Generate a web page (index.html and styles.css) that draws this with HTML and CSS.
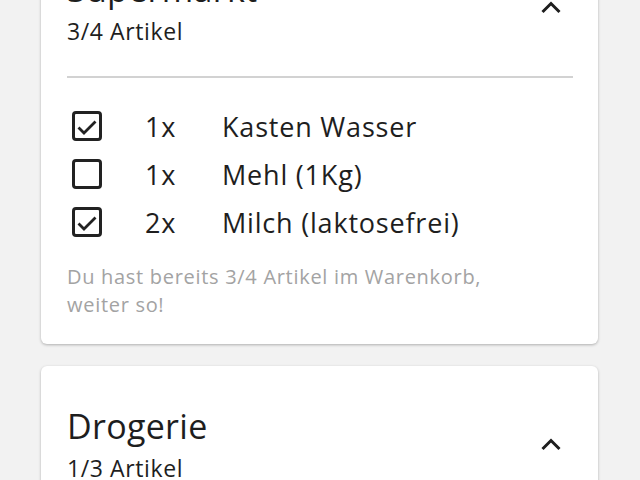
FILE: index.html
```html
<!DOCTYPE html>
<html lang="de">
<head>
<meta charset="utf-8">
<title>Einkaufsliste</title>
<link rel="stylesheet" href="styles.css">
</head>
<body>
<main class="lists">
  <section class="card">
    <header class="card-head">
      <div class="card-titles">
        <h2 class="card-title">Supermarkt</h2>
        <div class="card-sub">3/4 Artikel</div>
      </div>
      <button class="toggle" aria-label="Einklappen">
        <svg width="24" height="24" viewBox="0 0 24 24"><path d="M3.5 17 L12 8.5 L20.5 17" fill="none" stroke="#1e1e1e" stroke-width="3"/></svg>
      </button>
    </header>
    <hr class="divider">
    <ul class="items">
      <li class="item">
        <span class="check"><svg width="30" height="30" viewBox="0 0 30 30"><rect x="1.5" y="1.5" width="27" height="27" rx="2.5" fill="none" stroke="#222" stroke-width="3"/><path d="M6.5 16.5 L12 22 L23.5 10.5" fill="none" stroke="#222" stroke-width="2.8"/></svg></span>
        <span class="qty">1x</span>
        <span class="name">Kasten Wasser</span>
      </li>
      <li class="item">
        <span class="check"><svg width="30" height="30" viewBox="0 0 30 30"><rect x="1.5" y="1.5" width="27" height="27" rx="2.5" fill="none" stroke="#222" stroke-width="3"/></svg></span>
        <span class="qty">1x</span>
        <span class="name">Mehl (1Kg)</span>
      </li>
      <li class="item">
        <span class="check"><svg width="30" height="30" viewBox="0 0 30 30"><rect x="1.5" y="1.5" width="27" height="27" rx="2.5" fill="none" stroke="#222" stroke-width="3"/><path d="M6.5 16.5 L12 22 L23.5 10.5" fill="none" stroke="#222" stroke-width="2.8"/></svg></span>
        <span class="qty">2x</span>
        <span class="name">Milch (laktosefrei)</span>
      </li>
    </ul>
    <p class="hint">Du hast bereits 3/4 Artikel im Warenkorb,<br>weiter so!</p>
  </section>
  <section class="card">
    <header class="card-head">
      <div class="card-titles">
        <h2 class="card-title">Drogerie</h2>
        <div class="card-sub">1/3 Artikel</div>
      </div>
      <button class="toggle" aria-label="Einklappen">
        <svg width="24" height="24" viewBox="0 0 24 24"><path d="M3.5 17 L12 8.5 L20.5 17" fill="none" stroke="#1e1e1e" stroke-width="3"/></svg>
      </button>
    </header>
  </section>
</main>
</body>
</html>
```
FILE: styles.css
```css
html, body {
  margin: 0;
  padding: 0;
  background: #f2f2f2;
  font-family: "Open Sans", "Noto Sans", sans-serif;
  color: #1e1e1e;
  overflow: hidden;
}
.lists {
  display: flex;
  flex-direction: column;
  gap: 22px;
  padding: 0 42px 0 41px;
  margin-top: -71px;
}
.card {
  background: #fff;
  border-radius: 6px;
  box-shadow: 0 1px 3px rgba(0,0,0,0.28);
  padding: 39px 25px 25px 26px;
}
.card-head {
  display: flex;
  align-items: center;
  justify-content: space-between;
}
.card-title {
  margin: 0;
  font-size: 34px;
  line-height: 42px;
  font-weight: 400;
  letter-spacing: 0.3px;
}
.card-sub {
  margin-top: 6px;
  font-size: 23px;
  line-height: 30px;
  letter-spacing: 0.6px;
}
.toggle {
  width: 48px;
  height: 48px;
  margin-right: -2px;
  border: 0;
  background: none;
  padding: 0;
  display: flex;
  align-items: center;
  justify-content: center;
}
.divider {
  border: 0;
  height: 2px;
  background: #d2d2d2;
  margin: 30px 0 24px;
}
.items {
  list-style: none;
  margin: 0;
  padding: 0;
}
.item {
  display: grid;
  grid-template-columns: 78px 77px 1fr;
  align-items: center;
  height: 48px;
  font-size: 27px;
  letter-spacing: 0.8px;
}
.check {
  display: flex;
  margin-left: 5px;
}
.hint {
  margin: 17px 0 0;
  font-size: 20px;
  line-height: 28px;
  letter-spacing: 0.7px;
  color: #a3a3a3;
}
```
